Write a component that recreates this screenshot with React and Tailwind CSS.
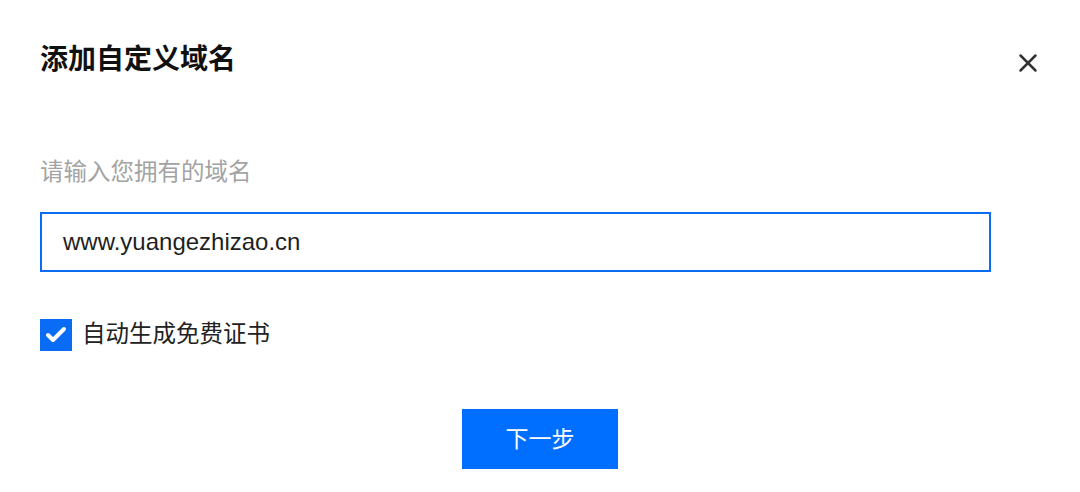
import { X, Check } from 'lucide-react';

export default function App() {
  return (
    <div
      className="w-[1080px] h-[492px] bg-white relative overflow-hidden"
      style={{ fontFamily: '"Liberation Sans", "Noto Sans CJK SC", sans-serif' }}
    >
      <div className="pl-[40px] pr-[89px]">
        {/* Header */}
        <div className="pt-[44px] h-[100px]">
          <h1 className="text-[28px] leading-[32px] font-bold text-[#111]">添加自定义域名</h1>
        </div>
        <button className="absolute left-[1013px] top-[48px] w-[30px] h-[30px] flex items-center justify-center text-[#333]">
          <X className="w-[30px] h-[30px]" strokeWidth={2} />
        </button>

        {/* Label */}
        <div className="mt-[56px] text-[23.5px] leading-[32px] text-[#a3a3a3]">请输入您拥有的域名</div>

        {/* Input */}
        <div className="mt-[24px] h-[60px] border-2 border-[#0a6cf5] flex items-center pl-[21px]">
          <span className="text-[24px] text-[#1f1f1f]">www.yuangezhizao.cn</span>
        </div>
      </div>

      {/* Checkbox */}
      <div className="mt-[45px] pl-[40px] flex items-center gap-[10px]">
        <div className="w-[32px] h-[32px] bg-[#0a6cf5] flex items-center justify-center">
          <Check className="w-[24px] h-[24px] text-white" strokeWidth={4} />
        </div>
        <span className="text-[23.5px] text-[#222]">自动生成免费证书</span>
      </div>

      {/* Next */}
      <div className="mt-[57px] flex justify-center">
        <button className="w-[156px] h-[60px] bg-[#006eff] text-white text-[23px]">下一步</button>
      </div>
    </div>
  );
}
